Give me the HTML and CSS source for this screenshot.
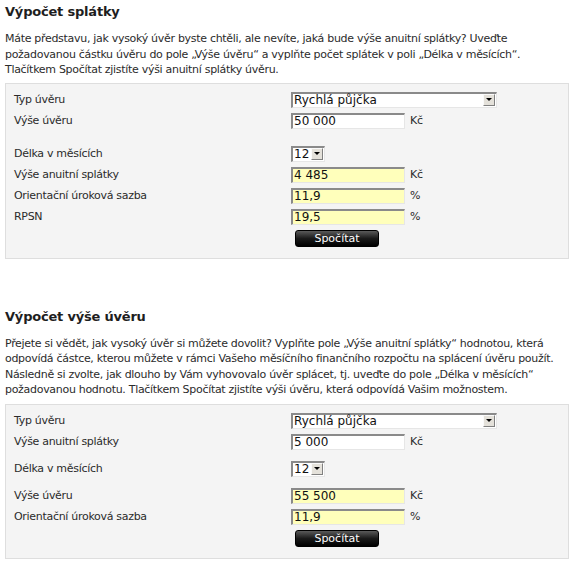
FILE: index.html
```html
<!DOCTYPE html>
<html lang="cs">
<head>
    <meta charset="UTF-8">
    <meta name="viewport" content="width=device-width, initial-scale=1.0">
    <title>Výpočet splátky</title>
    <link rel="stylesheet" href="styles.css">
</head>
<body>
    <div class="page">
        <h2>Výpočet splátky</h2>
        <p class="intro">Máte představu, jak vysoký úvěr byste chtěli, ale nevíte, jaká bude výše anuitní splátky? Uveďte<br>požadovanou částku úvěru do pole „Výše úvěru“ a vyplňte počet splátek v poli „Délka v měsících“.<br>Tlačítkem Spočítat zjistíte výši anuitní splátky úvěru.</p>

        <div class="calc">
            <div class="row">
                <span class="label">Typ úvěru</span>
                <div class="select wide"><span class="value">Rychlá půjčka</span><span class="arrow"></span></div>
            </div>
            <div class="row spaced">
                <span class="label">Výše úvěru</span>
                <div class="field">50 000</div><span class="unit">Kč</span>
            </div>
            <div class="row">
                <span class="label">Délka v měsících</span>
                <div class="select short"><span class="value">12</span><span class="arrow"></span></div>
            </div>
            <div class="row">
                <span class="label">Výše anuitní splátky</span>
                <div class="field result">4 485</div><span class="unit">Kč</span>
            </div>
            <div class="row">
                <span class="label">Orientační úroková sazba</span>
                <div class="field result">11,9</div><span class="unit">%</span>
            </div>
            <div class="row">
                <span class="label">RPSN</span>
                <div class="field result">19,5</div><span class="unit">%</span>
            </div>
            <div class="row">
                <span class="label"></span>
                <button class="submit">Spočítat</button>
            </div>
        </div>

        <h2 class="second">Výpočet výše úvěru</h2>
        <p class="intro intro-second">Přejete si vědět, jak vysoký úvěr si můžete dovolit? Vyplňte pole „Výše anuitní splátky“ hodnotou, která<br>odpovídá částce, kterou můžete v rámci Vašeho měsíčního finančního rozpočtu na splácení úvěru použít.<br>Následně si zvolte, jak dlouho by Vám vyhovovalo úvěr splácet, tj. uveďte do pole „Délka v měsících“<br>požadovanou hodnotu. Tlačítkem Spočítat zjistíte výši úvěru, která odpovídá Vašim možnostem.</p>

        <div class="calc">
            <div class="row">
                <span class="label">Typ úvěru</span>
                <div class="select wide"><span class="value">Rychlá půjčka</span><span class="arrow"></span></div>
            </div>
            <div class="row half">
                <span class="label">Výše anuitní splátky</span>
                <div class="field">5 000</div><span class="unit">Kč</span>
            </div>
            <div class="row half">
                <span class="label">Délka v měsících</span>
                <div class="select short"><span class="value">12</span><span class="arrow"></span></div>
            </div>
            <div class="row">
                <span class="label">Výše úvěru</span>
                <div class="field result">55 500</div><span class="unit">Kč</span>
            </div>
            <div class="row">
                <span class="label">Orientační úroková sazba</span>
                <div class="field result">11,9</div><span class="unit">%</span>
            </div>
            <div class="row">
                <span class="label"></span>
                <button class="submit">Spočítat</button>
            </div>
        </div>
    </div>
</body>
</html>
```

FILE: styles.css
```css
body {
    margin: 0;
    background: #fff;
    font-family: "DejaVu Sans", Verdana, sans-serif;
    font-size: 11px;
    letter-spacing: -0.3px;
    color: #2b2b2b;
}
.page {
    width: 564px;
    padding-left: 5px;
}
h2 {
    margin: 0;
    padding-top: 3px;
    font-size: 13px;
    line-height: 18px;
    letter-spacing: -0.2px;
    font-weight: bold;
    color: #1e1e1e;
}
h2.second {
    padding-top: 49px;
}
.intro {
    margin: 10px 0 5px;
    line-height: 15.5px;
    white-space: nowrap;
}
.intro-second {
    margin-bottom: 6px;
}
.calc {
    background: #f4f4f4;
    border: 1px solid #dedede;
    padding: 8px 8px 11px;
}
.row {
    display: flex;
    align-items: center;
    height: 16px;
    margin-bottom: 5px;
}
.row:last-child {
    margin-bottom: 0;
    height: 17px;
}
.row.spaced {
    margin-bottom: 17px;
}
.row.half {
    margin-bottom: 11px;
}
.label {
    width: 277px;
    flex-shrink: 0;
}
.field,
.select {
    box-sizing: border-box;
    height: 16px;
    background: #fff;
    border-style: solid;
    border-width: 2px 1px 1px 2px;
    border-color: #8a8a8a #e6e6e6 #e6e6e6 #8a8a8a;
    font-size: 12px;
    line-height: 13px;
    letter-spacing: 0;
    padding-left: 1px;
    color: #111;
}
.field {
    width: 114px;
}
.field.result {
    background: #ffffbb;
}
.unit {
    margin-left: 5px;
}
.select {
    display: flex;
    justify-content: space-between;
}
.select.wide {
    width: 206px;
}
.select.short {
    width: 34px;
}
.arrow {
    width: 12px;
    height: 12px;
    margin: 0 1px 0 0;
    background: #e4e1da;
    border: 1px solid;
    border-color: #fafafa #808080 #808080 #fafafa;
    box-sizing: border-box;
    position: relative;
}
.arrow::after {
    content: "";
    position: absolute;
    left: 2px;
    top: 3px;
    border-left: 3px solid transparent;
    border-right: 3px solid transparent;
    border-top: 3px solid #000;
}
.submit {
    margin-left: 4px;
    width: 84px;
    height: 17px;
    padding: 0;
    border: 1px solid #000;
    border-radius: 3px;
    background: linear-gradient(#5a5a5a, #1a1a1a 50%, #000);
    color: #fff;
    font-family: "DejaVu Sans", Verdana, sans-serif;
    font-size: 11px;
    font-weight: normal;
    letter-spacing: 0;
    cursor: pointer;
}
```
